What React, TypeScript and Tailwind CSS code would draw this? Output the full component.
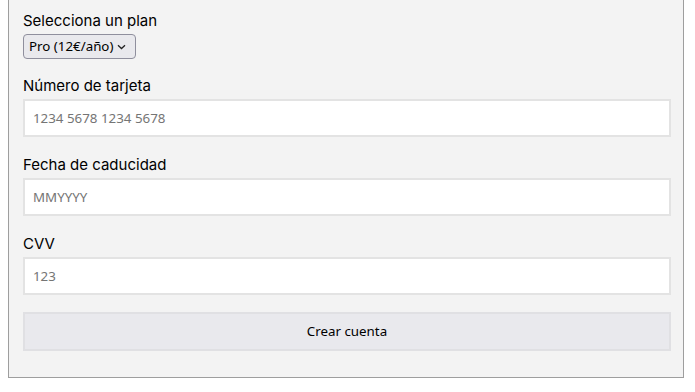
import React from 'react';

const fieldClass =
  "block w-full h-[38px] mt-[3px] bg-white border-2 border-[#e3e3e3] px-[8px] text-[13.33px] text-black placeholder:text-[#757575] outline-none [font-family:'Noto_Sans',sans-serif]";

const labelClass = "block h-6 text-[15px] leading-[27px]";

const App: React.FC = () => {
  return (
    <div className="w-[695px] h-[392px] bg-white [font-family:Inter,sans-serif]">
      <div className="ml-[8px] w-[676px] border border-t-0 border-[#9e9e9e] bg-[#f3f3f3] pl-[14px] pr-[12px] pt-[7px] pb-[26px] text-black">
        <form onSubmit={(e) => e.preventDefault()}>
          {/* Plan */}
          <label className={labelClass}>Selecciona un plan</label>
          <div className="relative mt-[3px] w-[113px]">
            <select className="block h-[25px] w-[113px] appearance-none rounded-[4px] border border-[#8f8f9d] bg-[#e9e9ed] pl-[5px] pr-[20px] text-[13.33px] text-black [font-family:'Noto_Sans',sans-serif]">
              <option>Pro (12€/año)</option>
              <option>Básico (gratis)</option>
            </select>
            <svg
              className="pointer-events-none absolute right-[10px] top-[10px]"
              width="9"
              height="6"
              viewBox="0 0 9 6"
              fill="none"
            >
              <path d="M1 1.2L4.5 4.5L8 1.2" stroke="#222" strokeWidth="1.3" />
            </svg>
          </div>

          {/* Tarjeta */}
          <label className={`mt-[13px] ${labelClass}`}>Número de tarjeta</label>
          <input className={fieldClass} placeholder="1234 5678 1234 5678" />

          <label className={`mt-[14px] ${labelClass}`}>Fecha de caducidad</label>
          <input className={fieldClass} placeholder="MMYYYY" />

          <label className={`mt-[14px] ${labelClass}`}>CVV</label>
          <input className={fieldClass} placeholder="123" />

          <button
            type="submit"
            className="mt-[17px] block h-[39px] w-full border-2 border-[#e0e0e3] bg-[#e9e9ed] text-[13.33px] text-black [font-family:'Noto_Sans',sans-serif]"
          >
            Crear cuenta
          </button>
        </form>
      </div>
    </div>
  );
};

export default App;
